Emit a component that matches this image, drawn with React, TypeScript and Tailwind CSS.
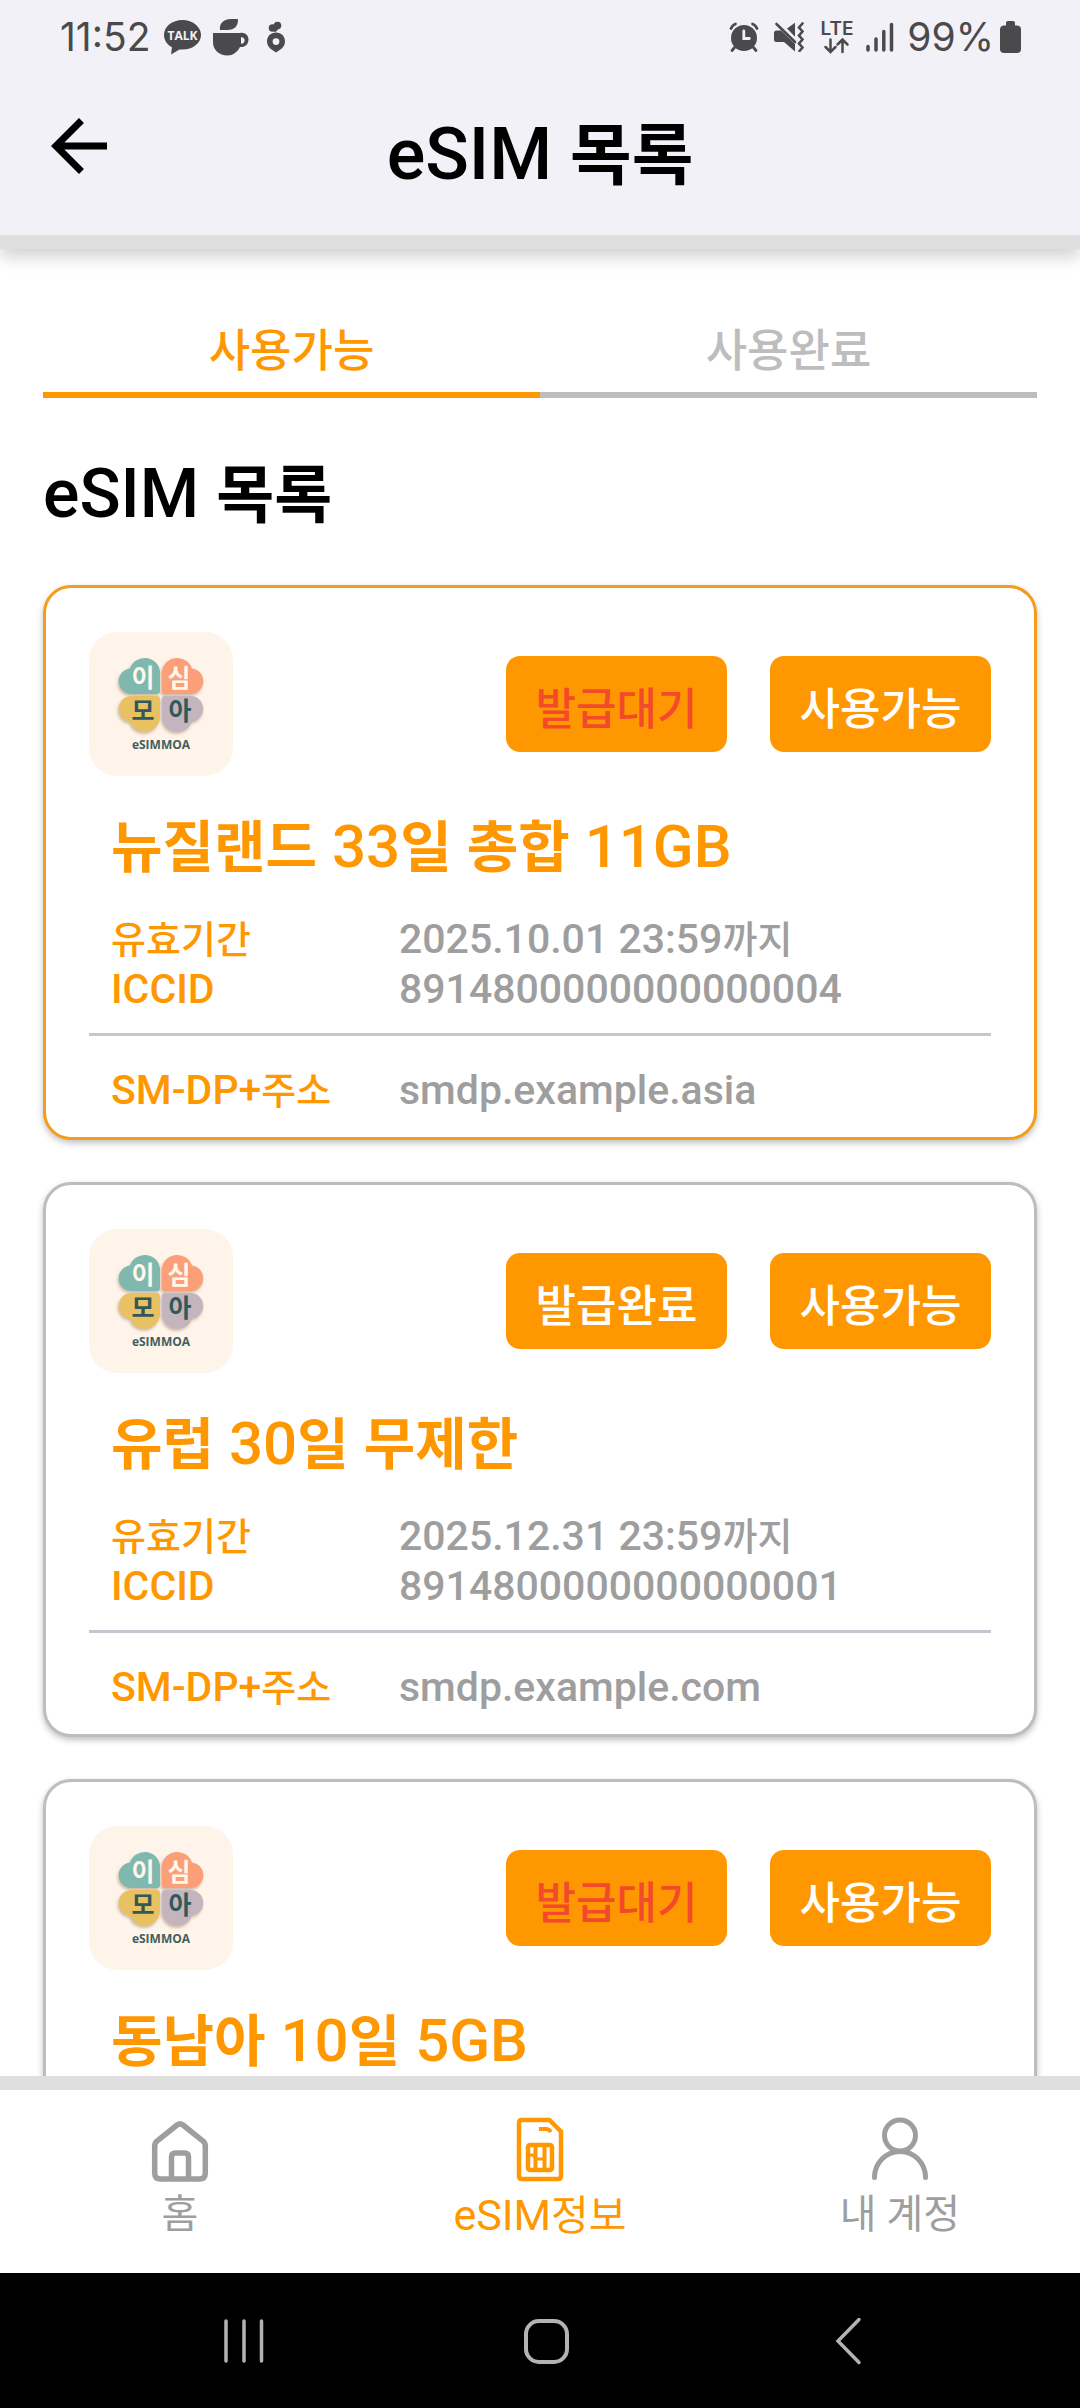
import { useState } from "react";
import type { ReactNode } from "react";
import clsx from "clsx";

type TabId = "available" | "used";
type NavId = "home" | "esim" | "account";

type Esim = {
  id: string;
  title: string;
  issued: boolean;
  details?: {
    validUntil: string;
    iccid: string;
    smdp: string;
  };
};

const ESIMS: Esim[] = [
  {
    id: "nz",
    title: "뉴질랜드 33일 총합 11GB",
    issued: false,
    details: {
      validUntil: "2025.10.01 23:59까지",
      iccid: "8914800000000000004",
      smdp: "smdp.example.asia",
    },
  },
  {
    id: "eu",
    title: "유럽 30일 무제한",
    issued: true,
    details: {
      validUntil: "2025.12.31 23:59까지",
      iccid: "8914800000000000001",
      smdp: "smdp.example.com",
    },
  },
  {
    id: "sea",
    title: "동남아 10일 5GB",
    issued: false,
  },
];

const TABS: { id: TabId; label: string }[] = [
  { id: "available", label: "사용가능" },
  { id: "used", label: "사용완료" },
];

// Hangul runs are set a little smaller than the Latin text beside them
function Mixed({ text, hangul }: { text: string; hangul: string }) {
  return (
    <>
      {text.split(/([가-힣]+)/).map((part, i) =>
        i % 2 === 1 ? (
          <span key={i} className={hangul}>
            {part}
          </span>
        ) : (
          part
        ),
      )}
    </>
  );
}

function StatusBar() {
  return (
    <div className="flex h-[74px] items-center justify-between pr-[59px] pl-[60px] font-['Inter',sans-serif] text-[39px] leading-[74px] text-[#4a4a4c]">
      <div className="flex items-center">
        <span>11:52</span>
        <svg width="37" height="36" viewBox="0 0 37 36" className="ml-[14px]" fill="#4a4a4c">
          <path d="M18.500 1C8.300 1 0 7.600 0 16c0 5.300 3.200 9.700 8 12.300L7 35.500l8.500-5.100c1 .1 2 .2 3 .2C28.700 30.600 37 24.200 37 16S28.700 1 18.500 1z" />
          <text x="18.500" y="21" textAnchor="middle" fontFamily="Open Sans, sans-serif" fontSize="12" fontWeight="700" fill="#f2f1f8">
            TALK
          </text>
        </svg>
        <svg width="37" height="38" viewBox="0 0 37 38" className="ml-[11px]" fill="#4a4a4c">
          <path d="M8 12C7 5 12 1 19 1h7c0 7-3 11-11 11z" />
          <path
            fillRule="evenodd"
            d="M1 15h27c4.500-1 8.500 2 8.500 6.500 0 4.800-3.500 8-8.500 7.500C25 34.500 21 37.500 15.500 37.500 7 37.500 1 32 1 24zm28 4.200v6.500c2.300.2 3.600-1 3.600-3.200s-1.300-3.500-3.600-3.300z"
          />
        </svg>
        <svg width="18" height="32" viewBox="0 0 18 32" className="ml-[18px]" fill="#4a4a4c">
          <circle cx="5.500" cy="7" r="3.800" />
          <circle cx="10.500" cy="4.500" r="3.800" />
          <path d="M5 7.500l5-5 3 4-5 5z" />
          <path
            fillRule="evenodd"
            d="M9 11.500c5.200 0 9 3.800 9 9 0 3.500-2 6.500-5 8.300L9 31.500l-4-2.700c-3-1.800-5-4.800-5-8.300 0-5.200 3.800-9 9-9zm0 5.700a3.400 3.400 0 1 0 0 6.800 3.400 3.400 0 0 0 0-6.800z"
          />
        </svg>
      </div>

      <div className="flex items-center">
        <svg width="30" height="30" viewBox="0 0 30 30" fill="none" stroke="#4a4a4c" strokeLinecap="round">
          <circle cx="15" cy="16" r="13" fill="#4a4a4c" stroke="none" />
          <path d="M2 6.500Q3.500 3 6.500 2M28 6.500Q26.500 3 23.500 2" strokeWidth="2.800" />
          <path d="M5.500 25.500L3 28.500M24.500 25.500l2.500 3" strokeWidth="2.800" />
          <path d="M14.800 9v7.500h5.500" stroke="#f2f1f8" strokeWidth="2.800" />
        </svg>
        <svg width="31" height="30" viewBox="0 0 31 30" className="ml-[15px]" fill="#4a4a4c">
          <path d="M0 11q0-2.500 2.500-2.500H7L21 22v7.500L10 20H2.500Q0 20 0 17.500z" />
          <path d="M13 6.500L21 .8v14z" />
          <path d="M2.500 2L21 20" stroke="#4a4a4c" strokeWidth="2.600" strokeLinecap="round" />
          <path
            d="M28.500 1.500l-3.500 4 3.500 4-3.500 4 3.500 4-3.500 4 3.500 4-3 3.500"
            fill="none"
            stroke="#4a4a4c"
            strokeWidth="2.600"
            strokeLinecap="round"
          />
        </svg>
        <svg width="34" height="34" viewBox="0 0 34 34" className="ml-[15px] overflow-visible" fill="#4a4a4c">
          <text x="17" y="15" textAnchor="middle" fontFamily="Inter, sans-serif" fontSize="19" fontWeight="600">
            LTE
          </text>
          <path
            d="M10.500 19.500v12M5.500 27l5 5 5-5M22.500 32V20M17.500 24.500l5-5 5 5"
            fill="none"
            stroke="#4a4a4c"
            strokeWidth="2.500"
            strokeLinecap="round"
          />
        </svg>
        <svg width="28" height="30" viewBox="0 0 28 30" className="ml-[12px]" stroke="#4a4a4c" strokeWidth="3.500" strokeLinecap="round">
          <path d="M2 24.500V28M10 17v11M17.800 9.500V28M25.500 2.500V28" />
        </svg>
        <span className="ml-[13px]">99%</span>
        <svg width="21" height="32" viewBox="0 0 21 32" className="ml-[6px]" fill="#4a4a4c">
          <path d="M8 0h5q2 0 2 2v2.500h2.500Q21 5 21 8.500V28q0 4-4 4H4q-4 0-4-4V8.500Q0 5 3.500 4.500H6V2q0-2 2-2z" />
        </svg>
      </div>
    </div>
  );
}

function Header() {
  return (
    <header className="relative z-10 border-b-[14px] border-[#dfdfdf] bg-[#f2f1f8] shadow-[0_8px_16px_rgba(0,0,0,0.18)]">
      <StatusBar />
      <div className="grid h-[161px] grid-cols-[120px_1fr_120px] items-center">
        <button aria-label="뒤로" className="mb-[18px] ml-[37px] w-[84px]">
          <svg width="84" height="84" viewBox="0 0 24 24">
            <path d="M20 11H7.830l5.590-5.590L12 4l-8 8 8 8 1.410-1.410L7.830 13H20v-2z" />
          </svg>
        </button>
        <h1 className="h-[84px] text-center text-[72px] leading-[84px] font-medium">
          <Mixed text="eSIM 목록" hangul="text-[67px] font-bold" />
        </h1>
      </div>
    </header>
  );
}

function BrandLogo() {
  return (
    <svg
      width="144"
      height="144"
      viewBox="0 0 144 144"
      role="img"
      aria-label="eSIMMOA"
      className="rounded-[28px] bg-[#fef4ea]"
      fontFamily="Noto Sans CJK KR, sans-serif"
    >
      <defs>
        <filter id="petal" x="-20%" y="-20%" width="140%" height="140%">
          <feDropShadow dx="-1" dy="2" stdDeviation="1.500" floodColor="#8a6a4a" floodOpacity="0.450" />
        </filter>
      </defs>
      <g filter="url(#petal)">
        <path fill="#7fb8ae" d="M71 59V39A15.500 15.500 0 0 0 41 36.500 12.800 12.800 0 0 0 43 62H68Q71 62 71 59z" />
        <path fill="#fb9f78" d="M73 59V39A15.500 15.500 0 0 1 103 36.500 12.800 12.800 0 0 1 101 62H76Q73 62 73 59z" />
        <path fill="#e8c262" d="M71 67V86A15.500 15.500 0 0 1 41 89.500 12.800 12.800 0 0 1 43 64H68Q71 64 71 67z" />
        <path fill="#c3b4bd" d="M73 67V86A15.500 15.500 0 0 0 103 89.500 12.800 12.800 0 0 0 101 64H76Q73 64 73 67z" />
      </g>
      <g fontSize="25" fontWeight="700" textAnchor="middle">
        <text x="54" y="55" fill="#fff8ea">이</text>
        <text x="90" y="55" fill="#fff8ea">심</text>
        <text x="54" y="88" fill="#31595a">모</text>
        <text x="91" y="88" fill="#31595a">아</text>
      </g>
      <text x="72" y="117" textAnchor="middle" fontFamily="Open Sans, sans-serif" fontSize="12" fontWeight="700" fill="#42605e">
        eSIMMOA
      </text>
    </svg>
  );
}

function StatusButton({ children, pending }: { children: ReactNode; pending?: boolean }) {
  return (
    <button
      className={clsx(
        "h-24 w-[221px] rounded-[14px] bg-[#ff9800] pt-3 text-[44px] leading-[60px] font-medium",
        pending ? "text-[#f44a2c]" : "text-white",
      )}
    >
      {children}
    </button>
  );
}

function InfoRow({ label, value }: { label: string; value: string }) {
  return (
    <div className="grid h-[50px] grid-cols-[288px_1fr] whitespace-nowrap">
      <dt className="text-[#ff9800]">
        <Mixed text={label} hangul="text-[38px]" />
      </dt>
      <dd className="text-[#9e9e9e]">
        <Mixed text={value} hangul="text-[38px]" />
      </dd>
    </div>
  );
}

function EsimCard({ esim, selected }: { esim: Esim; selected: boolean }) {
  return (
    <li
      className={clsx(
        "rounded-[28px] border-3 bg-white px-[43px] pt-[44px] pb-[22px] shadow-[0_3px_6px_rgba(0,0,0,0.25)]",
        selected ? "border-[#f59c1a]" : "border-[#bdbdbd]",
      )}
    >
      <div className="flex items-center justify-between">
        <BrandLogo />
        <div className="flex gap-[43px]">
          <StatusButton pending={!esim.issued}>{esim.issued ? "발급완료" : "발급대기"}</StatusButton>
          <StatusButton>사용가능</StatusButton>
        </div>
      </div>
      <h3 className="mt-[29px] h-[84px] pl-[22px] text-[60px] leading-[84px] font-medium text-[#ff9800]">
        <Mixed text={esim.title} hangul="text-[56px] font-bold" />
      </h3>
      {esim.details && (
        <>
          <dl className="mt-[25px] pl-[22px] text-[41px] leading-[50px] font-medium">
            <InfoRow label="유효기간" value={esim.details.validUntil} />
            <InfoRow label="ICCID" value={esim.details.iccid} />
          </dl>
          <hr className="mt-[19px] border-t-3 border-[#cac4d0]" />
          <dl className="mt-[29px] pl-[22px] text-[41px] leading-[50px] font-medium">
            <InfoRow label="SM-DP+주소" value={esim.details.smdp} />
          </dl>
        </>
      )}
    </li>
  );
}

function HomeIcon() {
  return (
    <svg width="60" height="64" viewBox="0 0 60 64" fill="none" stroke="currentColor" strokeWidth="5.500" strokeLinejoin="round">
      <path d="M4.700 26q0-3 2-4.700L27 5q3-2.300 6 0l20.300 16.300q2 1.700 2 4.700v27q0 6-6 6H10.700q-6 0-6-6z" />
      <path d="M21.500 58V37q0-4 4-4h9q4 0 4 4v21" />
    </svg>
  );
}

function SimIcon() {
  return (
    <svg width="50" height="68" viewBox="0 0 50 68" fill="none" stroke="currentColor" strokeWidth="4.500" strokeLinejoin="round">
      <path d="M7 4h27.500L46 15.500V60q0 3-3 3H7q-3 0-3-3V7q0-3 3-3z" />
      <path d="M24 13h7q3 0 5 3" strokeWidth="4" />
      <rect x="13" y="29" width="24" height="25" rx="2" />
      <path d="M20.500 29v25M29.500 29v25" strokeWidth="4" />
      <path d="M13 39h5l3 4h8.500" strokeWidth="3" />
    </svg>
  );
}

function AccountIcon() {
  return (
    <svg width="60" height="68" viewBox="0 0 60 68" fill="none" stroke="currentColor" strokeWidth="5" strokeLinecap="round">
      <circle cx="30" cy="19.500" r="15.500" />
      <path d="M4.500 61.500A25.500 26 0 0 1 55.500 61.500" />
    </svg>
  );
}

const NAV: { id: NavId; label: string; icon: ReactNode }[] = [
  { id: "home", label: "홈", icon: <HomeIcon /> },
  { id: "esim", label: "eSIM정보", icon: <SimIcon /> },
  { id: "account", label: "내 계정", icon: <AccountIcon /> },
];

function BottomNav({ active, onChange }: { active: NavId; onChange: (id: NavId) => void }) {
  return (
    <nav className="grid h-[197px] shrink-0 grid-cols-3 border-t-[14px] border-[#dedede] bg-white">
      {NAV.map((item) => (
        <button
          key={item.id}
          onClick={() => onChange(item.id)}
          className={clsx(
            "flex flex-col items-center pt-[26px] leading-[62px]",
            item.id === active ? "text-[43px] text-[#ff9800]" : "text-[40px] text-[#9e9e9e]",
          )}
        >
          <span className="flex h-[68px] items-end">{item.icon}</span>
          <span>
            <Mixed text={item.label} hangul={item.id === active ? "text-[41px]" : "text-[40px]"} />
          </span>
        </button>
      ))}
    </nav>
  );
}

function SystemNav() {
  return (
    <div className="flex h-[135px] shrink-0 items-center justify-between bg-black px-[218px] text-[#b3b3b3]">
      <button aria-label="최근 앱">
        <svg width="50" height="50" viewBox="0 0 50 50" stroke="currentColor" strokeWidth="3.500" strokeLinecap="round">
          <path d="M8 5v40M26 5v40M43.500 5v40" />
        </svg>
      </button>
      <button aria-label="홈 화면">
        <svg width="50" height="50" viewBox="0 0 50 50" fill="none" stroke="currentColor" strokeWidth="4">
          <rect x="5" y="5" width="41" height="41" rx="13" />
        </svg>
      </button>
      <button aria-label="이전">
        <svg width="38" height="50" viewBox="0 0 38 50" fill="none" stroke="currentColor" strokeWidth="3.500" strokeLinecap="round">
          <path d="M35 3.500L14 25l21 21.500" />
        </svg>
      </button>
    </div>
  );
}

export default function App() {
  const [tab, setTab] = useState<TabId>("available");
  const [nav, setNav] = useState<NavId>("esim");

  return (
    <div className="flex h-screen flex-col bg-white font-['Roboto','Noto_Sans_CJK_KR',sans-serif] text-black">
      <Header />

      <main className="min-h-0 flex-1 overflow-y-auto px-[43px] [scrollbar-width:none]">
        <div role="tablist" className="mt-[59px] grid grid-cols-2">
          {TABS.map((item) => (
            <button
              key={item.id}
              role="tab"
              aria-selected={tab === item.id}
              onClick={() => setTab(item.id)}
              className={clsx(
                "h-[90px] border-b-6 pt-1 text-[45px] leading-[60px] font-medium",
                tab === item.id ? "border-[#ff9800] text-[#ff9800]" : "border-[#bdbdbd] text-[#bdbdbd]",
              )}
            >
              {item.label}
            </button>
          ))}
        </div>

        <h2 className="mt-[54px] h-[84px] text-[68px] leading-[84px] font-medium">
          <Mixed text="eSIM 목록" hangul="text-[63px] font-bold" />
        </h2>

        <ul className="mt-[49px] flex flex-col gap-[42px] pb-[42px]">
          {ESIMS.map((esim, i) => (
            <EsimCard key={esim.id} esim={esim} selected={i === 0} />
          ))}
        </ul>
      </main>

      <BottomNav active={nav} onChange={setNav} />
      <SystemNav />
    </div>
  );
}
